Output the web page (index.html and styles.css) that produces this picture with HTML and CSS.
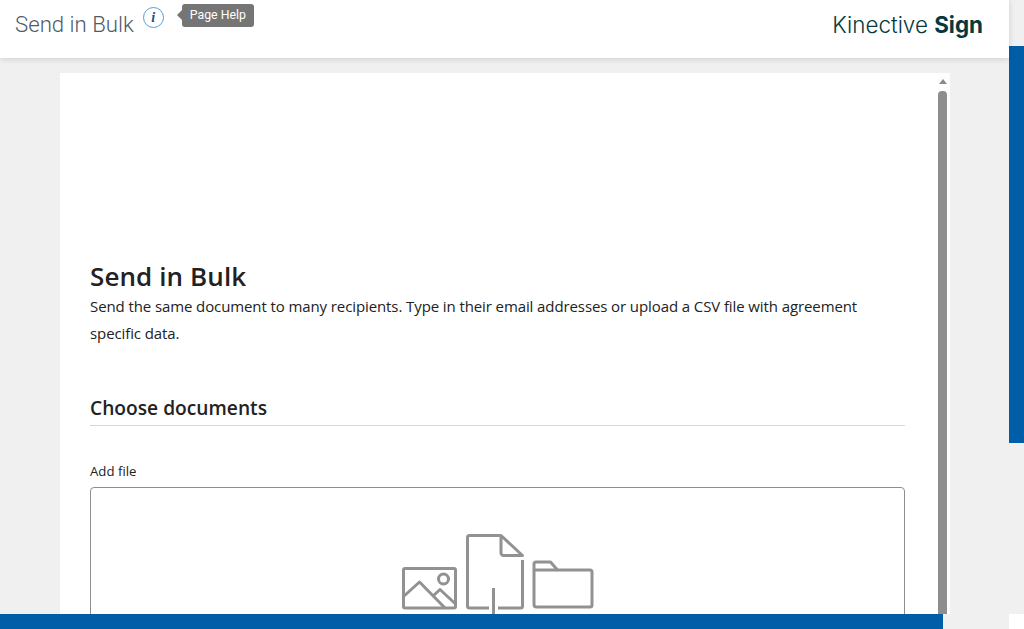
FILE: index.html
```html
<!DOCTYPE html>
<html lang="en">
<head>
    <meta charset="UTF-8">
    <meta name="viewport" content="width=device-width, initial-scale=1.0">
    <title>Send in Bulk</title>
    <link rel="stylesheet" href="styles.css">
</head>
<body>

    <div class="window">
        <div class="main">
            <header class="header">
                <div class="page-title">
                    <span class="page-name">Send in Bulk</span>
                    <span class="info-icon">i</span>
                    <span class="help-tip">Page Help</span>
                </div>
                <div class="brand">Kinective <b>Sign</b></div>
            </header>

            <div class="content">
                <div class="card">
                    <div class="card-body">
                        <h1>Send in Bulk</h1>
                        <p class="intro">Send the same document to many recipients. Type in their email addresses or upload a CSV file with agreement specific data.</p>
                        <h2>Choose documents</h2>
                        <div class="field-label">Add file</div>
                        <div class="dropzone">
                            <svg class="drop-icons" width="195" height="84" viewBox="0 0 195 84" fill="none" stroke="#929292" stroke-width="3" stroke-linejoin="round" stroke-linecap="butt">
                                <!-- picture -->
                                <rect x="3.5" y="36.5" width="52" height="39.5" rx="1.5"/>
                                <circle cx="43.5" cy="47" r="5"/>
                                <path d="M3.5 64.500L19.500 50L45 76"/>
                                <path d="M33 64L40 57.500L55 71.500"/>
                                <!-- document -->
                                <path d="M89 76H69.500a2 2 0 0 1-2-2V5.500a2 2 0 0 1 2-2H101L122.500 23.500H103.500a2.500 2.500 0 0 1-2.500-2.500V3.500"/>
                                <path d="M122.500 28V74a2 2 0 0 1-2 2H98"/>
                                <path d="M93.500 56V84"/>
                                <!-- folder -->
                                <path d="M134 72.500V32a2 2 0 0 1 2-2H150.500L157.500 38H190a2 2 0 0 1 2 2V73a2 2 0 0 1-2 2H136.500a2.500 2.500 0 0 1-2.500-2.500Z"/>
                                <path d="M134 38H157.500"/>
                            </svg>
                        </div>
                    </div>
                    <div class="scrollbar">
                        <div class="scroll-arrow"></div>
                        <div class="scroll-thumb"></div>
                    </div>
                </div>
            </div>
        </div>
        <div class="vbar">
            <div class="vbar-thumb"></div>
        </div>
    </div>

    <div class="hbar">
        <div class="hbar-thumb"></div>
        <div class="hbar-track"></div>
        <div class="hbar-corner"></div>
    </div>

</body>
</html>
```

FILE: styles.css
```css
html, body {
    margin: 0;
    height: 100%;
    overflow: hidden;
}
body {
    display: flex;
    flex-direction: column;
    background-color: #f0f0f0;
    color: #222;
    font-family: "Open Sans", "Noto Sans", sans-serif;
}
.window {
    display: flex;
    height: 614px;
    overflow: hidden;
}
.main {
    width: 1009px;
    display: flex;
    flex-direction: column;
}
.header {
    position: relative;
    height: 58px;
    flex: none;
    display: flex;
    justify-content: space-between;
    background: #fff;
    box-shadow: 0 1px 6px rgba(0,0,0,0.15);
}
.page-title {
    display: flex;
    align-items: flex-start;
    padding-left: 15px;
}
.page-name {
    margin-top: 10px;
    font-family: Roboto, sans-serif;
    font-weight: 300;
    font-size: 22.2px;
    line-height: 29px;
    color: #4f5b69;
}
.info-icon {
    width: 19px;
    height: 19px;
    margin: 7px 0 0 9px;
    border: 1px solid #5b9bd0;
    border-radius: 50%;
    text-align: center;
    font-family: "Liberation Serif", serif;
    font-style: italic;
    font-weight: bold;
    font-size: 14px;
    line-height: 19px;
    color: #1d4f8c;
}
.help-tip {
    position: relative;
    margin: 4px 0 0 18px;
    padding: 0 8px;
    height: 23px;
    background: #757575;
    border-radius: 3px;
    font-family: Roboto, sans-serif;
    font-size: 12.3px;
    line-height: 23px;
    color: #fff;
}
.help-tip::before {
    content: "";
    position: absolute;
    left: -5px;
    top: 6px;
    border-style: solid;
    border-width: 5px 5px 5px 0;
    border-color: transparent #757575 transparent transparent;
}
.brand {
    margin: 10px 26px 0 0;
    font-family: Inter, sans-serif;
    font-weight: 300;
    font-size: 22.4px;
    line-height: 29px;
    color: #06393f;
}
.brand b {
    font-weight: 700;
}
.content {
    flex: 1;
    min-height: 0;
    padding: 15px 59px 0 60px;
}
.card {
    display: flex;
    height: 100%;
    background: #fff;
    overflow: hidden;
}
.card-body {
    width: 815px;
    flex: none;
    padding: 186px 33px 0 30px;
}
h1 {
    margin: 0;
    font-size: 26px;
    font-weight: 600;
    letter-spacing: 0.1px;
    line-height: 34px;
    color: #222;
}
.intro {
    margin: 0;
    font-size: 15px;
    letter-spacing: -0.1px;
    line-height: 27px;
    color: #222;
}
h2 {
    margin: 46px 0 0;
    padding-bottom: 2px;
    border-bottom: 1px solid #d8d8d8;
    font-size: 19.2px;
    font-weight: 600;
    line-height: 30px;
    color: #222;
}
.field-label {
    margin-top: 35px;
    font-size: 13.2px;
    line-height: 20px;
    color: #222;
}
.dropzone {
    margin-top: 6px;
    height: 200px;
    border: 1px solid #8e8e8e;
    border-radius: 4px;
    text-align: center;
}
.drop-icons {
    display: block;
    margin: 44px auto 0;
}
.scrollbar {
    width: 9px;
    flex: none;
    display: flex;
    flex-direction: column;
    align-items: center;
    padding-right: 3px;
    background: #fdfdfd;
}
.scroll-arrow {
    margin-top: 6px;
    border-style: solid;
    border-width: 0 4.5px 5px 4.5px;
    border-color: transparent transparent #8a8a8a transparent;
}
.scroll-thumb {
    width: 9px;
    flex: 1;
    margin-top: 7px;
    background: #8e8e8e;
    border-radius: 4px 4px 0 0;
}
.vbar {
    width: 15px;
    padding-top: 46px;
}
.vbar-thumb {
    height: 397px;
    background: #005ea8;
}
.hbar {
    display: flex;
    height: 15px;
    flex: none;
}
.hbar-thumb {
    width: 943px;
    background: #005ea8;
}
.hbar-track {
    width: 66px;
    background: #f0f0f0;
}
.hbar-corner {
    width: 15px;
    background: #fff;
}
```
